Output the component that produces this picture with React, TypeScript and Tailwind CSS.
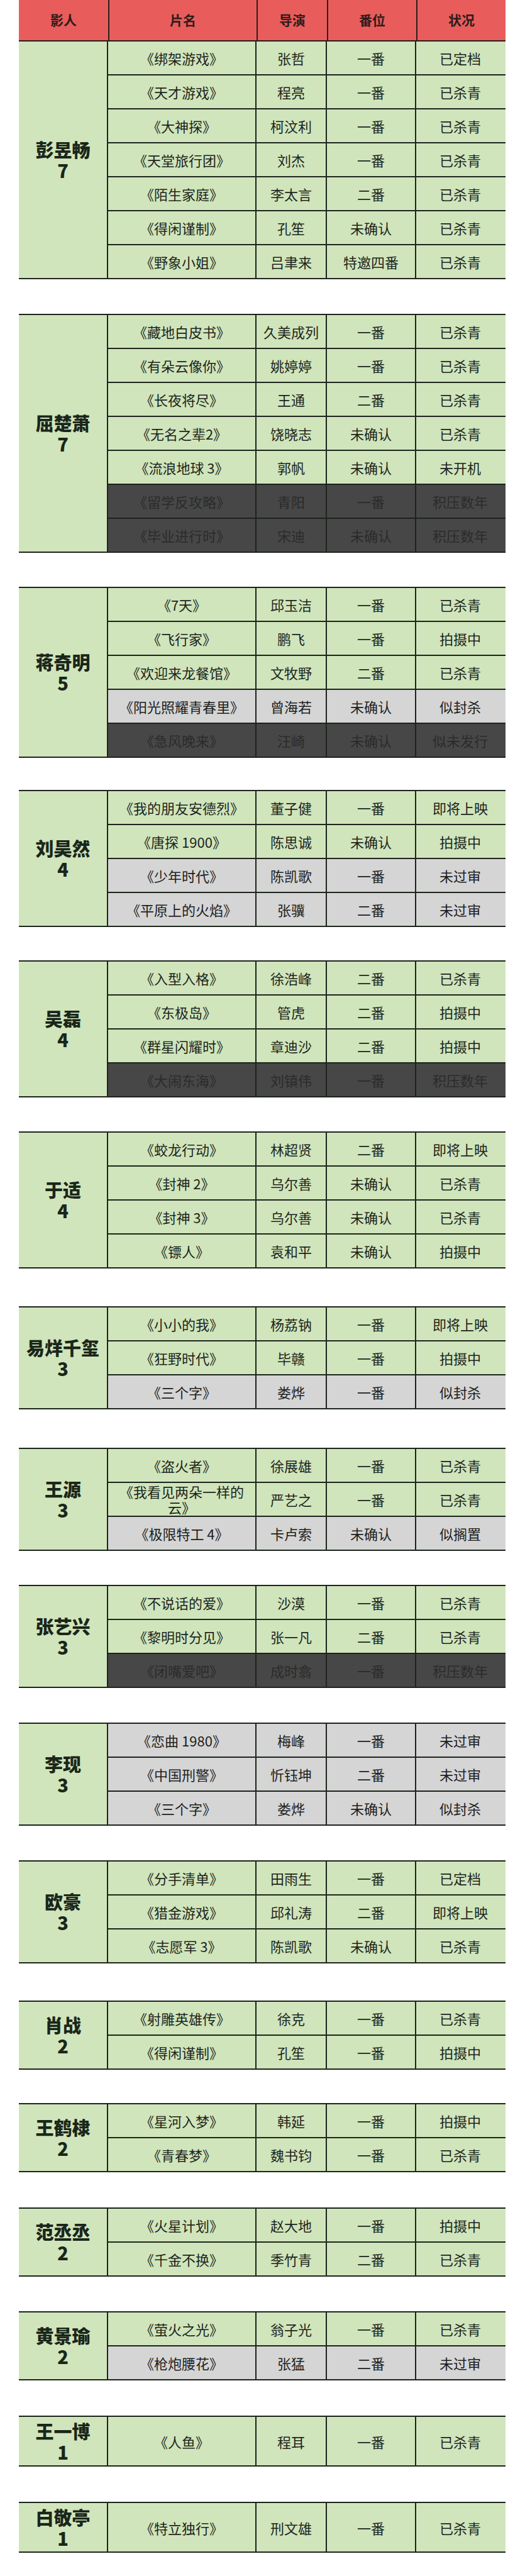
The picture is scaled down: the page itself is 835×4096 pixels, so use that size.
import React from "react";

type Kind = "g" | "l" | "d";
type Row = [string, string, string, string, Kind];
type Block = { name: string; count: string; gap: string; tall?: boolean; rows: Row[] };

const blocks: Block[] = [
  {
    name: "彭昱畅",
    count: "7",
    gap: "",
    rows: [
      ["《绑架游戏》", "张哲", "一番", "已定档", "g"],
      ["《天才游戏》", "程亮", "一番", "已杀青", "g"],
      ["《大神探》", "柯汶利", "一番", "已杀青", "g"],
      ["《天堂旅行团》", "刘杰", "一番", "已杀青", "g"],
      ["《陌生家庭》", "李太言", "二番", "已杀青", "g"],
      ["《得闲谨制》", "孔笙", "未确认", "已杀青", "g"],
      ["《野象小姐》", "吕聿来", "特邀四番", "已杀青", "g"],
    ],
  },
  {
    name: "屈楚萧",
    count: "7",
    gap: "mt-[55px]",
    rows: [
      ["《藏地白皮书》", "久美成列", "一番", "已杀青", "g"],
      ["《有朵云像你》", "姚婷婷", "一番", "已杀青", "g"],
      ["《长夜将尽》", "王通", "二番", "已杀青", "g"],
      ["《无名之辈2》", "饶晓志", "未确认", "已杀青", "g"],
      ["《流浪地球 3》", "郭帆", "未确认", "未开机", "g"],
      ["《留学反攻略》", "青阳", "一番", "积压数年", "d"],
      ["《毕业进行时》", "宋迪", "未确认", "积压数年", "d"],
    ],
  },
  {
    name: "蒋奇明",
    count: "5",
    gap: "mt-[54px]",
    rows: [
      ["《7天》", "邱玉洁", "一番", "已杀青", "g"],
      ["《飞行家》", "鹏飞", "一番", "拍摄中", "g"],
      ["《欢迎来龙餐馆》", "文牧野", "二番", "已杀青", "g"],
      ["《阳光照耀青春里》", "曾海若", "未确认", "似封杀", "l"],
      ["《急风晚来》", "汪崎", "未确认", "似未发行", "d"],
    ],
  },
  {
    name: "刘昊然",
    count: "4",
    gap: "mt-[51px]",
    rows: [
      ["《我的朋友安德烈》", "董子健", "一番", "即将上映", "g"],
      ["《唐探 1900》", "陈思诚", "未确认", "拍摄中", "g"],
      ["《少年时代》", "陈凯歌", "一番", "未过审", "l"],
      ["《平原上的火焰》", "张骥", "二番", "未过审", "l"],
    ],
  },
  {
    name: "吴磊",
    count: "4",
    gap: "mt-[53px]",
    rows: [
      ["《入型入格》", "徐浩峰", "二番", "已杀青", "g"],
      ["《东极岛》", "管虎", "二番", "拍摄中", "g"],
      ["《群星闪耀时》", "章迪沙", "二番", "拍摄中", "g"],
      ["《大闹东海》", "刘镇伟", "一番", "积压数年", "d"],
    ],
  },
  {
    name: "于适",
    count: "4",
    gap: "mt-[54px]",
    rows: [
      ["《蛟龙行动》", "林超贤", "二番", "即将上映", "g"],
      ["《封神 2》", "乌尔善", "未确认", "已杀青", "g"],
      ["《封神 3》", "乌尔善", "未确认", "已杀青", "g"],
      ["《镖人》", "袁和平", "未确认", "拍摄中", "g"],
    ],
  },
  {
    name: "易烊千玺",
    count: "3",
    gap: "mt-[60px]",
    rows: [
      ["《小小的我》", "杨荔钠", "一番", "即将上映", "g"],
      ["《狂野时代》", "毕赣", "一番", "拍摄中", "g"],
      ["《三个字》", "娄烨", "一番", "似封杀", "l"],
    ],
  },
  {
    name: "王源",
    count: "3",
    gap: "mt-[61px]",
    rows: [
      ["《盗火者》", "徐展雄", "一番", "已杀青", "g"],
      ["《我看见两朵一样的云》", "严艺之", "一番", "已杀青", "g"],
      ["《极限特工 4》", "卡卢索", "未确认", "似搁置", "l"],
    ],
  },
  {
    name: "张艺兴",
    count: "3",
    gap: "mt-[54px]",
    rows: [
      ["《不说话的爱》", "沙漠", "一番", "已杀青", "g"],
      ["《黎明时分见》", "张一凡", "二番", "已杀青", "g"],
      ["《闭嘴爱吧》", "成时翕", "一番", "积压数年", "d"],
    ],
  },
  {
    name: "李现",
    count: "3",
    gap: "mt-[55px]",
    rows: [
      ["《恋曲 1980》", "梅峰", "一番", "未过审", "l"],
      ["《中国刑警》", "忻钰坤", "二番", "未过审", "l"],
      ["《三个字》", "娄烨", "未确认", "似封杀", "l"],
    ],
  },
  {
    name: "欧豪",
    count: "3",
    gap: "mt-[55px]",
    rows: [
      ["《分手清单》", "田雨生", "一番", "已定档", "g"],
      ["《猎金游戏》", "邱礼涛", "二番", "即将上映", "g"],
      ["《志愿军 3》", "陈凯歌", "未确认", "已杀青", "g"],
    ],
  },
  {
    name: "肖战",
    count: "2",
    gap: "mt-[59px]",
    rows: [
      ["《射雕英雄传》", "徐克", "一番", "已杀青", "g"],
      ["《得闲谨制》", "孔笙", "一番", "拍摄中", "g"],
    ],
  },
  {
    name: "王鹤棣",
    count: "2",
    gap: "mt-[53px]",
    rows: [
      ["《星河入梦》", "韩延", "一番", "拍摄中", "g"],
      ["《青春梦》", "魏书钧", "一番", "已杀青", "g"],
    ],
  },
  {
    name: "范丞丞",
    count: "2",
    gap: "mt-[56px]",
    rows: [
      ["《火星计划》", "赵大地", "一番", "拍摄中", "g"],
      ["《千金不换》", "季竹青", "二番", "已杀青", "g"],
    ],
  },
  {
    name: "黄景瑜",
    count: "2",
    gap: "mt-[55px]",
    rows: [
      ["《萤火之光》", "翁子光", "一番", "已杀青", "g"],
      ["《枪炮腰花》", "张猛", "二番", "未过审", "l"],
    ],
  },
  {
    name: "王一博",
    count: "1",
    gap: "mt-[56px]",
    tall: true,
    rows: [["《人鱼》", "程耳", "一番", "已杀青", "g"]],
  },
  {
    name: "白敬亭",
    count: "1",
    gap: "mt-[56px]",
    tall: true,
    rows: [["《特立独行》", "刑文雄", "一番", "已杀青", "g"]],
  },
];

const kindClass: Record<Kind, string> = {
  g: "bg-[#d0e5bb] text-[#1d251d]",
  l: "bg-[#d5d5d5] text-[#1d211d]",
  d: "bg-[#474747] text-[#2b2b2b]",
};

const heads = ["影人", "片名", "导演", "番位", "状况"];

function Cell({ text, first }: { text: string; first?: boolean }) {
  const long = text.length > 10;
  return (
    <div
      className={`flex items-center justify-center px-[8px] text-center text-[22px] ${
        long ? "leading-[25px]" : "leading-[28px]"
      } ${first ? "" : "border-l-2 border-[#1c241c]"}`}
    >
      <div>{text}</div>
    </div>
  );
}

export default function App() {
  return (
    <div className="min-h-screen bg-white font-['Noto_Sans_CJK_SC','Noto_Sans',sans-serif]">
      <div className="ml-[30px] w-[774px] pb-[37px]">
        <div className="grid h-[66px] grid-cols-[142px_236px_112px_142px_142px] border-b-2 border-[#2a1d1d] bg-[#e85d5b]">
          {heads.map((h, i) => (
            <div
              key={h}
              className={`flex items-center justify-center text-[21px] font-bold text-[#2e1c1c] ${
                i > 0 ? "border-l-2 border-[#2a1d1d]" : ""
              }`}
            >
              {h}
            </div>
          ))}
        </div>
        {blocks.map((b, bi) => (
          <div
            key={b.name}
            className={`flex ${bi === 0 ? "" : "border-t-2"} border-[#1c241c] ${b.gap}`}
          >
            <div className="flex w-[142px] shrink-0 items-center justify-center border-r-2 border-b-2 border-[#1c241c] bg-[#d0e5bb] text-[29px] font-black text-[#1a261a]">
              <div className="whitespace-pre-line text-center leading-[33px]">{`${b.name}\n${b.count}`}</div>
            </div>
            <div className="flex flex-1 flex-col">
              {b.rows.map((r, ri) => (
                <div
                  key={ri}
                  className={`grid grid-cols-[234px_112px_142px_142px] border-b-2 border-[#1c241c] ${
                    b.tall ? "h-[79px]" : "h-[54px]"
                  } ${kindClass[r[4]]}`}
                >
                  <Cell text={r[0]} first />
                  <Cell text={r[1]} />
                  <Cell text={r[2]} />
                  <Cell text={r[3]} />
                </div>
              ))}
            </div>
          </div>
        ))}
      </div>
    </div>
  );
}
